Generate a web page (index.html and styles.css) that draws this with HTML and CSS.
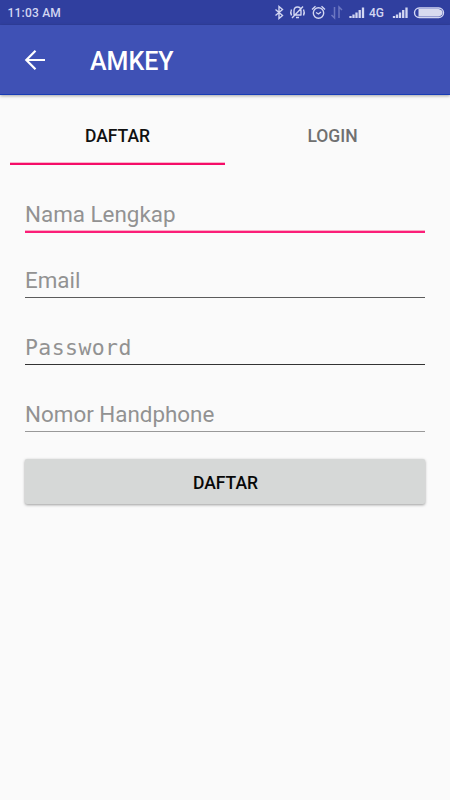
FILE: index.html
```html
<!DOCTYPE html>
<html lang="id">
<head>
<meta charset="utf-8">
<title>AMKEY</title>
<link rel="stylesheet" href="styles.css">
</head>
<body>
<div class="status">
  <span class="clock">11:03 AM</span>
  <svg class="tray" width="185" height="25" viewBox="265 0 185 25" fill="none" stroke="#d2d6f2" stroke-width="1.4">
    <path d="M275.500 9.500l7 6-3.500 3V6.500l3.500 3-7 6"/>
    <path d="M293.500 15h8M294 14.800V11q0-4 3.500-4t3.500 4v3.800M296 17.500h3M291.500 9.500q-1.500 3 0 6M303.500 9.500q1.500 3 0 6M303 6.500l-11 11.500"/>
    <circle cx="318.500" cy="13" r="5.200"/>
    <path d="M316 12.500l2.500 1.500 2.500-2M312 9.500l3.500-3.200M325 9.500l-3.500-3.200"/>
    <path stroke="#6c77c1" stroke-width="1.500" d="M334.500 7v11l-3-3M339 18V7l3 3"/>
    <path stroke-width="2.300" d="M350.500 16v2M353.500 14.500V18M356.500 12.500V18M359.700 10V18M363 7.500V18"/>
    <path stroke-width="2.300" d="M394 16v2M397 14.500V18M400 12.500V18M403.200 10V18M406.500 7.500V18"/>
    <rect x="414.500" y="8" width="29" height="9.500" rx="4.700"/>
    <path fill="#d8dbef" stroke="none" d="M418.500 9h20q4 .5 4 3.700t-4 3.800h-20z"/>
    <text class="network" x="369" y="17">4G</text>
  </svg>
</div>
<header class="toolbar">
  <svg class="back" width="22" height="22" viewBox="0 0 22 22" fill="none" stroke="#fff" stroke-width="2.200"><path d="M21 11H2.500M11.500 1.800L2.300 11l9.200 9.200"/></svg>
  <h1 class="title">AMKEY</h1>
</header>
<nav class="tabs">
  <div class="tab active">DAFTAR</div>
  <div class="tab">LOGIN</div>
</nav>
<main class="form">
  <div class="field focus"><span>Nama Lengkap</span></div>
  <div class="field email"><span>Email</span></div>
  <div class="field password"><span>Password</span></div>
  <div class="field phone"><span>Nomor Handphone</span></div>
  <button class="submit">DAFTAR</button>
</main>
</body>
</html>
```
FILE: styles.css
```css
* { box-sizing: border-box; }
body { margin: 0; height: 800px; overflow: hidden; background: #fafafa; font-family: Roboto, sans-serif; }
.status { height: 25px; display: flex; justify-content: space-between; align-items: center; padding-left: 7.500px; background: #303f9f; }
.clock { color: #d2d6f2; font-size: 12px; font-weight: 500; letter-spacing: .2px; }
.tray { display: block; }
.network { fill: #d2d6f2; stroke: none; font-size: 12px; font-weight: 500; }
.toolbar { height: 70px; display: flex; align-items: center; padding-left: 24px; gap: 44px; background: #3f51b5; border-bottom: 1px solid #173bb5; box-shadow: 0 1px 3px rgba(0,0,0,.35); }
.title { margin: 4px 0 0; color: #fff; font-size: 25px; font-weight: 500; line-height: 30px; letter-spacing: 0; }
.tabs { display: flex; margin: 10px 10px 0; height: 60px; }
.tab { flex: 1; text-align: center; font-size: 17.500px; font-weight: 500; line-height: 63px; color: #707070; }
.active { color: #111; border-bottom: 2px solid #f50c68; box-shadow: inset 0 -1px #fab5cb; }
.form { padding: 25px 25px 0; }
.field { height: 43px; margin-bottom: 23px; padding-top: 11px; color: #929292; font-size: 22.400px; line-height: 27px; border-bottom: 2px solid #fb1e78; box-shadow: inset 0 -1px #faadc6; }
.field span { display: block; white-space: nowrap; }
.email, .password, .phone { height: 42px; border-bottom: 1px solid #5b5b5b; box-shadow: none; }
.email { margin-bottom: 25px; }
.password { margin-bottom: 25px; border-color: #333; }
.password span { font-family: "DejaVu Sans Mono", monospace; font-size: 21.500px; letter-spacing: .4px; }
.phone { border-color: #999; margin-bottom: 27px; }
.submit { display: block; width: 100%; height: 45px; padding: 2px 0 0 1px; border: 0; border-radius: 2px; background: #d6d8d7; color: #080808; font: 500 17.500px Roboto, sans-serif; box-shadow: 0 1px 3px rgba(0,0,0,.38); }
```
